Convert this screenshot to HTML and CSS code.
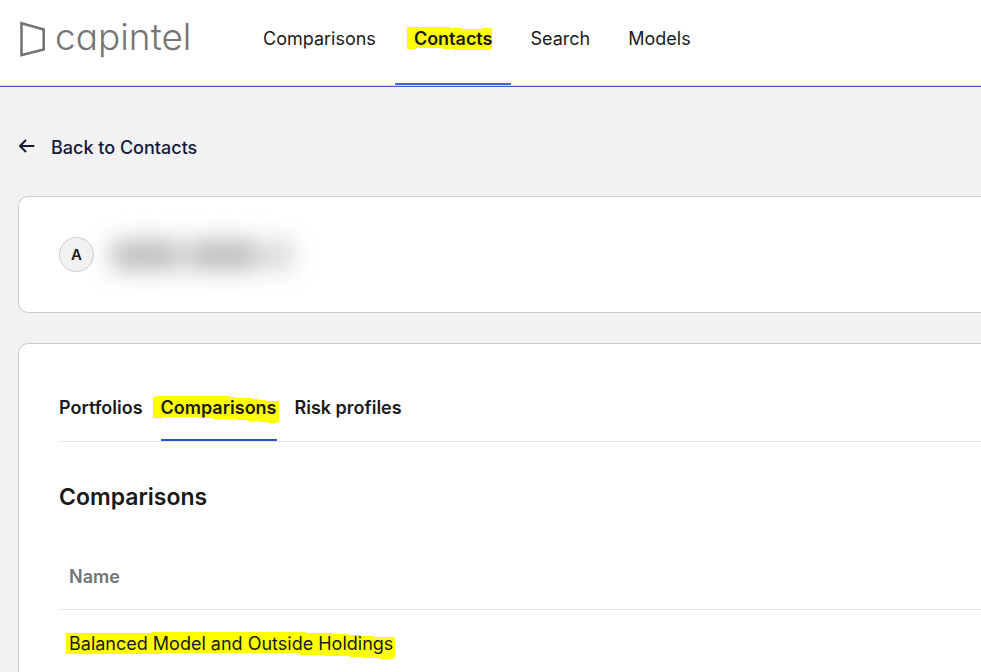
FILE: index.html
```html
<!DOCTYPE html>
<html lang="en">

<head>
    <meta charset="UTF-8">
    <meta name="viewport" content="width=device-width, initial-scale=1.0">
    <title>Capintel</title>
    <link rel="stylesheet" href="styles.css">
</head>

<body>
    <header class="header">
        <a class="logo" href="#">
            <svg class="logo-mark" width="26" height="36" viewBox="0 0 26 36" aria-hidden="true">
                <path d="M1.5 2.3 L23.7 8.6 V28.6 L1.5 34 Z" fill="none" stroke="#757575" stroke-width="2.6" />
            </svg>
            <span class="logo-text">capintel</span>
        </a>
        <nav class="nav">
            <a class="nav-link" href="#">Comparisons</a>
            <a class="nav-link active" href="#">
                <span class="marked">Contacts
                    <svg class="marker marker-nav" width="85" height="23" viewBox="0 0 85 23" aria-hidden="true">
                        <path d="M0 0H43V1H55V2H75V1H85V22H83V23H47V22H35V21H9V22H0Z" />
                    </svg>
                </span>
            </a>
            <a class="nav-link" href="#">Search</a>
            <a class="nav-link" href="#">Models</a>
        </nav>
    </header>

    <main class="page">
        <a class="back" href="#">
            <svg width="18" height="20" viewBox="0 0 18 20" aria-hidden="true">
                <path d="M16.3 8H2M8 2L2 8L8 14" fill="none" stroke="#14193a" stroke-width="2" stroke-linejoin="round" />
            </svg>
            Back to Contacts
        </a>

        <section class="card client">
            <span class="avatar">A</span>
            <span class="hidden-name">
                <span class="smudge first"></span>
                <span class="smudge last"></span>
                <span class="smudge tail"></span>
            </span>
        </section>

        <section class="card details">
            <nav class="tabs">
                <button class="tab" type="button">Portfolios</button>
                <button class="tab active" type="button">
                    <span class="marked">Comparisons
                        <svg class="marker marker-tab" width="126" height="27" viewBox="0 0 126 27" aria-hidden="true">
                            <path d="M0 1H3V0H77V1H82V2H100V3H106V4H113V5H126V26H124V27H114V26H105V25H94V24H82V23H60V22H47V21H11V22H0Z" />
                        </svg>
                    </span>
                </button>
                <button class="tab" type="button">Risk profiles</button>
            </nav>

            <h2>Comparisons</h2>

            <table class="comparisons">
                <thead>
                    <tr>
                        <th>Name</th>
                    </tr>
                </thead>
                <tbody>
                    <tr>
                        <td>
                            <a class="marked" href="#">Balanced Model and Outside Holdings
                                <svg class="marker marker-row" width="329" height="27" viewBox="0 0 329 27" aria-hidden="true">
                                    <path d="M0 1H86V0H240V1H266V2H283V3H294V4H308V5H329V26H327V27H314V26H296V25H284V24H258V23H234V21H94V22H0Z" />
                                </svg>
                            </a>
                        </td>
                    </tr>
                </tbody>
            </table>
        </section>
    </main>
</body>

</html>
```
FILE: styles.css
```css
* {
    box-sizing: border-box;
}

body {
    margin: 0;
    font-family: Inter, "Liberation Sans", sans-serif;
    font-size: 18px;
    line-height: 24px;
    color: #1a1a1a;
    background: #f2f2f2;
    overflow-x: hidden;
}

a {
    color: inherit;
    text-decoration: none;
}

.header {
    display: flex;
    height: 87px;
    padding-left: 20px;
    background: #fff;
    border-bottom: 1px solid #3b5bdb;
    box-shadow: inset 0 -1px #d9d9d9;
}

.logo {
    display: flex;
    width: 224px;
    height: 78px;
    gap: 9px;
    align-items: center;
    color: #757575;
}

.logo-text {
    padding-bottom: 5px;
    font-size: 37px;
    font-weight: 350;
    line-height: 40px;
    font-feature-settings: "cv11";
}

.nav {
    display: flex;
}

.nav-link {
    padding: 27px 19px 0;
    height: 85px;
}

.nav-link.active {
    font-weight: 600;
    border-bottom: 2px solid #3d63f5;
}

/* highlighter strokes behind the text */
.marked {
    position: relative;
    z-index: 0;
    display: inline-block;
}

.marker {
    position: absolute;
    z-index: -1;
    fill: #ff0;
}

.marker-nav {
    left: -7px;
    top: 0;
}

.marker-tab {
    left: -8px;
    top: 0;
}

.marker-row {
    left: -3px;
    top: 0;
}

.page {
    padding: 49px 0 0 18px;
}

.back {
    display: flex;
    width: fit-content;
    gap: 15px;
    align-items: center;
    font-weight: 500;
    color: #14193a;
}

.card {
    background: #fff;
    border: 1px solid #ccc;
    border-right: none;
    border-radius: 10px 0 0 10px;
}

.client {
    display: flex;
    gap: 18px;
    align-items: center;
    margin-top: 36px;
    padding: 40px;
}

.avatar {
    width: 35px;
    height: 35px;
    border: 1px solid #ccc;
    border-radius: 50%;
    background: #f2f2f2;
    font-size: 15px;
    font-weight: 600;
    line-height: 34px;
    text-align: center;
}

.hidden-name {
    display: flex;
    gap: 8px;
    filter: blur(12px);
}

.smudge {
    height: 28px;
    background: #b6b7b9;
}

.first {
    width: 68px;
}

.last {
    width: 72px;
}

.tail {
    width: 24px;
    background: #cfd0d0;
}

.details {
    margin-top: 30px;
    padding: 50px 0 0 40px;
    min-height: 340px;
}

.tabs {
    display: flex;
    gap: 18px;
    border-bottom: 1px solid #e5e5e5;
}

.tab {
    height: 47px;
    padding: 0 0 18px;
    border: none;
    border-bottom: 2px solid transparent;
    background: none;
    font: inherit;
    font-weight: 600;
    color: inherit;
    cursor: pointer;
}

.tab.active {
    border-bottom-color: #2851cc;
}

h2 {
    margin: 40px 0 33px;
    font-size: 23px;
    line-height: 30px;
    font-weight: 600;
}

.comparisons {
    width: 100%;
    border-collapse: collapse;
}

.comparisons th,
.comparisons td {
    padding: 22px 10px;
    border-bottom: 1px solid #e5e5e5;
    text-align: left;
}

.comparisons th {
    padding: 20px 10px;
    font-weight: 600;
    color: #757575;
}
```
